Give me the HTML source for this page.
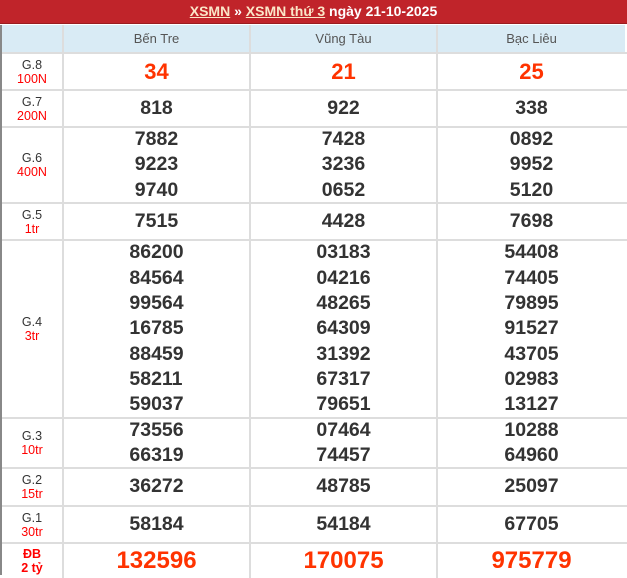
<!DOCTYPE html>
<html><head><meta charset="utf-8"><style>
*{margin:0;padding:0;box-sizing:border-box}
body{width:627px;height:575px;overflow:hidden;background:#fff;font-family:"Liberation Sans",Arial,sans-serif;position:relative}
.hd{position:absolute;left:0;top:0;width:627px;height:24px;background:#c0242a;color:#fff;font-weight:bold;font-size:14px;text-align:center;line-height:23px;border-bottom:1px solid #9a1c20}
.hd u{color:#fbe6c8}
.r{position:absolute;left:2px;width:625px;border-bottom:2px solid #ddd;display:flex}
.c0{width:62px;border-right:2px solid #ddd;display:flex;flex-direction:column;justify-content:center;align-items:center;font-size:12.5px;line-height:14px;color:#333}
.c0 span{color:#f00}
.c{width:187px;border-right:2px solid #ddd;display:flex;flex-direction:column;justify-content:center;align-items:center;font-weight:bold;font-size:19.5px;color:#333;line-height:25.3px}
.c.l{border-right:none;width:187px}
.th{background:#d9ebf5;font-weight:normal;font-size:13px;color:#555}
.red{color:#ff3300;font-size:22px}
.lft{position:absolute;left:0;top:25px;width:2px;height:550px;background:#888}
</style></head><body>
<div class="hd"><u>XSMN</u> » <u>XSMN thứ 3</u> ngày 21-10-2025</div>
<div class="lft"></div>
<div class="r" style="top:25px;height:29px"><div class="c0 th" style="background:#d9ebf5"></div><div class="c th">Bến Tre</div><div class="c th">Vũng Tàu</div><div class="c th l">Bạc Liêu</div></div>
<div class="r" style="top:54px;height:37px"><div class="c0">G.8<span>100N</span></div><div class="c red">34</div><div class="c red">21</div><div class="c red l">25</div></div>
<div class="r" style="top:91px;height:37px"><div class="c0">G.7<span>200N</span></div><div class="c">818</div><div class="c">922</div><div class="c l">338</div></div>
<div class="r" style="top:128px;height:76px"><div class="c0">G.6<span>400N</span></div><div class="c">7882<br>9223<br>9740</div><div class="c">7428<br>3236<br>0652</div><div class="c l">0892<br>9952<br>5120</div></div>
<div class="r" style="top:204px;height:37px"><div class="c0">G.5<span>1tr</span></div><div class="c">7515</div><div class="c">4428</div><div class="c l">7698</div></div>
<div class="r" style="top:241px;height:178px"><div class="c0">G.4<span>3tr</span></div><div class="c">86200<br>84564<br>99564<br>16785<br>88459<br>58211<br>59037</div><div class="c">03183<br>04216<br>48265<br>64309<br>31392<br>67317<br>79651</div><div class="c l">54408<br>74405<br>79895<br>91527<br>43705<br>02983<br>13127</div></div>
<div class="r" style="top:419px;height:50px"><div class="c0">G.3<span>10tr</span></div><div class="c">73556<br>66319</div><div class="c">07464<br>74457</div><div class="c l">10288<br>64960</div></div>
<div class="r" style="top:469px;height:38px"><div class="c0">G.2<span>15tr</span></div><div class="c">36272</div><div class="c">48785</div><div class="c l">25097</div></div>
<div class="r" style="top:507px;height:37px"><div class="c0">G.1<span>30tr</span></div><div class="c">58184</div><div class="c">54184</div><div class="c l">67705</div></div>
<div class="r" style="top:544px;height:34px;border-bottom:none"><div class="c0" style="color:#f00;font-weight:bold">ĐB<span>2 tỷ</span></div><div class="c red" style="font-size:24px">132596</div><div class="c red" style="font-size:24px">170075</div><div class="c red l" style="font-size:24px">975779</div></div>
</body></html>
